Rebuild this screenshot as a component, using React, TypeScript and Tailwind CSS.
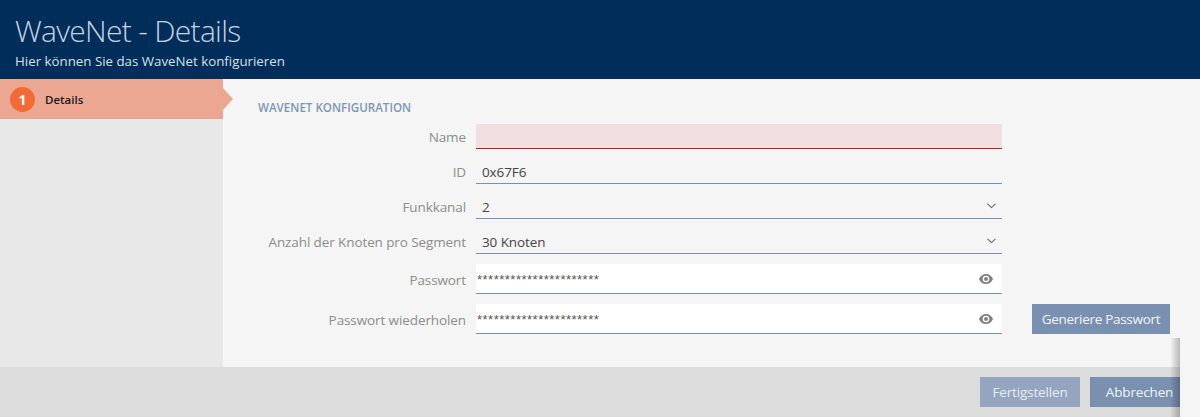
import React from "react";

const labelCls = "w-[218px] pr-[10px] pt-[2px] text-right text-[13.5px] tracking-[-0.1px] text-[#8c8c8c] shrink-0";

function Chevron() {
  return (
    <svg width="9" height="6" viewBox="0 0 9 6" className="shrink-0" fill="none">
      <path d="M0.5 0.8 L4.500 4.600 L8.500 0.800" stroke="#666666" strokeWidth="1.1" />
    </svg>
  );
}

function Eye() {
  return (
    <svg width="14" height="10" viewBox="0 0 14 10" className="shrink-0">
      <path fillRule="evenodd" fill="#808080" d="M7 0C3.8 0 1.2 2 0 5c1.2 3 3.8 5 7 5s5.800-2 7-5c-1.200-3-3.800-5-7-5Zm0 8.300A3.300 3.300 0 1 1 7 1.700a3.300 3.300 0 0 1 0 6.600Zm0-5.300a2 2 0 1 0 0 4 2 2 0 0 0 0-4Z" />
    </svg>
  );
}

function Row({ label, children, className }: { label: string; children: React.ReactNode; className: string }) {
  return (
    <div className={"flex items-center " + className}>
      <div className={labelCls}>{label}</div>
      {children}
    </div>
  );
}

function Value({ text, select }: { text: string; select?: boolean }) {
  return (
    <div className="w-[526px] h-[25px] border-b border-[#7a90b0] pl-[6px] pr-[6px] flex items-center justify-between text-[13.5px] tracking-[-0.1px] text-[#444444]">
      <span className="mt-[2px]">{text}</span>
      {select && <Chevron />}
    </div>
  );
}

function Password() {
  return (
    <div className="w-[526px] h-[30px] bg-white border-b border-[#7a90b0] pl-[1px] pr-[9px] flex items-center justify-between">
      <span className="text-[13px] tracking-[0.5px] leading-[16px] mt-[2px] text-[#555555] font-['Liberation_Sans',sans-serif]">**********************</span>
      <Eye />
    </div>
  );
}

export default function App() {
  return (
    <div className="relative w-[1200px] h-[417px] overflow-hidden flex flex-col bg-[#f5f5f5] font-['Open_Sans',sans-serif]">
      <header className="h-[79px] shrink-0 bg-[#002d59] pl-[15px] pt-[10px]">
        <h1 className="text-[30px] leading-[41px] tracking-[-0.7px] font-light text-[#c4d3e2]">WaveNet - Details</h1>
        <p className="text-[13.3px] leading-[18px] mt-[1px] text-[#d5e0ea]">Hier können Sie das WaveNet konfigurieren</p>
      </header>
      <div className="flex flex-1 min-h-0">
        <aside className="w-[223px] shrink-0 bg-[#e8e8e8]">
          <div className="relative h-[40px] bg-[#eba792] pl-[10px] flex items-center gap-[10px]">
            <div className="w-[25px] h-[25px] rounded-full bg-[#f26a35] text-white text-[14px] font-bold flex items-center justify-center">1</div>
            <span className="text-[11.5px] leading-[14px] mt-[2px] font-semibold text-[#1a1a1a]">Details</span>
            <div className="absolute left-[223px] top-[9px] border-y-[11px] border-y-transparent border-l-[10px] border-l-[#eba792]" />
          </div>
        </aside>
        <main className="flex-1 pl-[35px] pt-[22px] pr-[30px] flex flex-col">
          <h2 className="text-[11.6px] leading-[14px] mb-[-1px] font-semibold text-[#7f95b6] uppercase">WaveNet Konfiguration</h2>
          <Row label="Name" className="mt-[10px]">
            <div className="w-[526px] h-[25px] bg-[#f2e0e0] border-b border-[#c41f1f]" />
          </Row>
          <Row label="ID" className="mt-[10px]"><Value text="0x67F6" /></Row>
          <Row label="Funkkanal" className="mt-[10px]"><Value text="2" select /></Row>
          <Row label="Anzahl der Knoten pro Segment" className="mt-[10px]"><Value text="30 Knoten" select /></Row>
          <Row label="Passwort" className="mt-[10px]"><Password /></Row>
          <Row label="Passwort wiederholen" className="mt-[10px]">
            <Password />
            <button className="ml-[30px] w-[138px] h-[30px] bg-[#7a90b0] text-[#f2f5f8] text-[13.5px] tracking-[-0.3px]">Generiere Passwort</button>
          </Row>
        </main>
      </div>
      <footer className="h-[50px] shrink-0 bg-[#dcdcdc] flex justify-end items-start pt-[10px] pr-[20px] overflow-hidden">
        <div className="flex gap-[10px]">
          <button className="w-[100px] h-[30px] bg-[#93a5bf] text-[#e8ecf2] text-[13.5px] tracking-[-0.15px]">Fertigstellen</button>
          <button className="w-[90px] h-[30px] bg-[#7a90b0] text-[#f2f5f8] text-[13.5px] tracking-[-0.15px] pl-[9px]">Abbrechen</button>
        </div>
      </footer>
      <div className="absolute left-[1170px] top-[338px] bottom-0 w-[10px] bg-gradient-to-r from-transparent to-[#00000040]" />
      <div className="absolute left-[1180px] top-[338px] bottom-0 right-0 bg-[#f5f5f5]" />
    </div>
  );
}
